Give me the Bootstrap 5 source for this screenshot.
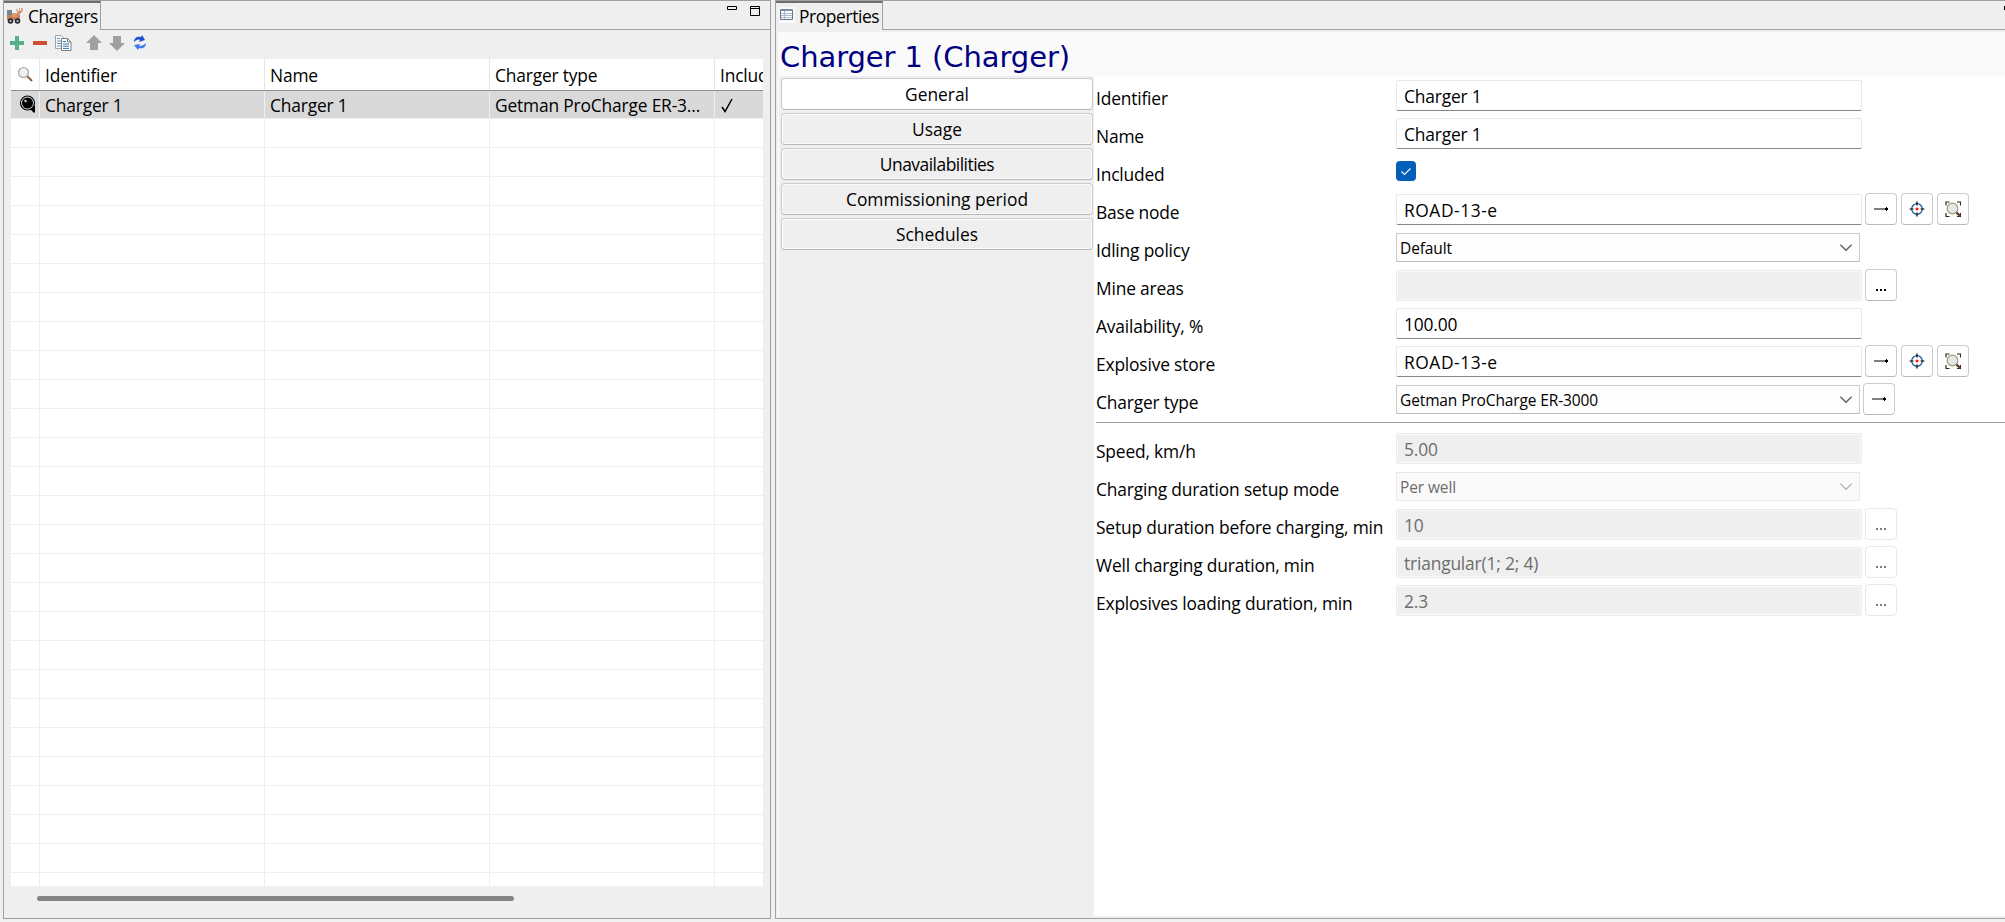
<!DOCTYPE html>
<html lang="en">
<head>
<meta charset="utf-8">
<title>Chargers</title>
<link href="https://cdn.jsdelivr.net/npm/bootstrap@5.3.0/dist/css/bootstrap.min.css" rel="stylesheet">
<style>
body{background:#f0f0f0;font-family:"Open Sans","Noto Sans",sans-serif;font-size:17.4px;line-height:24px;color:#000;letter-spacing:-.18px;height:922px;overflow:hidden}
svg{display:block;flex:none}
.pane{border:1px solid #a0a0a0;border-top-width:1px;background:#efefef;height:919px;flex:none}
.pane-left{width:768px;margin-left:3px}
.pane-right{width:1230px;border-right:0;margin-left:4px}
.tabstrip{height:29px;flex:none}
.tab-on{border-top:2px solid #6e6e6e;border-right:1px solid #a0a0a0;height:29px;white-space:nowrap;flex:none}
.tab-on span{letter-spacing:-.4px;margin:-1px 0 0 4px}
.tab-rest{border-bottom:1px solid #a0a0a0}
.tools{height:29px;flex:none}
.grid-view{margin-left:7px;width:752px;height:827px;background:#fff;overflow:hidden;flex:none}
.grid-row{display:grid;grid-template-columns:29px 225px 225px 225px 48px;height:29px;border-bottom:1px solid #efefef}
.grid-row>div{border-right:1px solid #efefef;padding-left:5px;white-space:nowrap;overflow:hidden;line-height:29px}
.grid-row>div:last-child{border-right:0}
.grid-head{height:32px;border-bottom:1px solid #909090}
.grid-head>div{line-height:33px;border-color:#e5e5e5}
.grid-sel{height:28px;background:#d9d9d9}
.scroll-thumb{margin:10px 0 0 33px;width:477px;height:5px;border-radius:3px;background:#858585}
.obj-title{height:44px;margin-left:2px;padding-left:2px;background:#fafafa;color:#000080;font:29px/50px "DejaVu Sans",sans-serif;letter-spacing:-.08px;white-space:nowrap}
.side{width:316px;margin-left:2px;border-left:1px solid #fff;padding:2px 1px 0 2px;gap:3px}
.side-btn{height:32px;border:1px solid #ccc;border-bottom-color:#b8b8b8;border-radius:4px;background:#efefef;box-shadow:inset 0 0 0 1px #fbfbfb;text-align:center;padding:0;line-height:31px;color:#000}
.side-btn.on{background:#fff}
.tight{letter-spacing:-.5px}
.props{background:#fff;padding:2px 0 0 2px}
.prop{height:38px;padding-top:2px}
.prop>label{width:300px;white-space:nowrap;line-height:36px}
.fld{width:466px;height:31px;border:1px solid #e8e8e8;border-bottom-color:#868686;border-radius:2px;padding-left:7px;line-height:31px;background:#fff}
.fld.node-id{letter-spacing:.55px}
.fld.off{background:#efefef;border-color:#ebebeb;box-shadow:inset 0 0 0 1px #fafafa;color:#6d6d6d}
.combo{width:464px;height:29px;margin-top:1px;border:1px solid #ccc;border-bottom-color:#bbb;border-radius:1px;background:#fdfdfd;padding:0 6px 0 3px;font-size:15.5px;letter-spacing:-.12px}
.combo.off{background:#fafafa;border-color:#e8e8e8;color:#6d6d6d}
.mini{width:32px;height:32px;margin:-1px 4px 0 0;border:1px solid #ccc;border-bottom-color:#b8b8b8;border-radius:4px;background:#fff;padding:0;display:flex;align-items:center;justify-content:center}
.mini.off{border-color:#e8e8e8}
.mini.off svg{opacity:.5}
.btns{margin-left:3px}
.tick{width:20px;height:20px;margin-top:5px;border-radius:4px;background:#005fb8}
.rule{height:1px;background:#a0a0a0;margin:2px 0 8px}
</style>
</head>
<body>
<svg width="0" height="0" class="position-absolute">
<defs>
<symbol id="arrow" viewBox="0 0 16 16"><path d="M1 8h11" stroke="#808080" stroke-width="2"/><path d="M12 7h1V6h1v1h1v2h-1v1h-1V9h-1z"/></symbol>
<symbol id="target" viewBox="0 0 16 16"><circle cx="8" cy="8" r="5.300" fill="none" stroke="#1c5a90" stroke-width="1.300"/><path d="M8 .5v4M8 11.500v4M.5 8h4M11.500 8h4" stroke="#000" stroke-width="1.200"/><path d="M8 6.500v3M6.500 8h3" stroke="#f00" stroke-width="1.300"/></symbol>
<symbol id="find" viewBox="0 0 16 16"><path d="M1 4.500V1h3.500M12 1h3.500v3.500M1 12v3.500h3.500M12 15.500h3.500V12" fill="none" stroke="#2b2632" stroke-width="1.200"/><path d="M10.500 10.500l4.500 4.500" stroke="#59402d" stroke-width="2.400"/><circle cx="7.500" cy="7.500" r="5.300" fill="#e3e8ec" stroke="#a59c70" stroke-width="1.200"/></symbol>
<symbol id="dots" viewBox="0 0 16 16"><path d="M3 12h2v2H3zM7 12h2v2H7zM11 12h2v2h-2z"/></symbol>
<symbol id="chev" viewBox="0 0 12 8"><path d="M1 1.500l5 5 5-5" fill="none" stroke="currentColor" stroke-width="1.100"/></symbol>
</defs>
</svg>
<div class="d-flex">
<section class="pane pane-left d-flex flex-column">
 <div class="tabstrip d-flex">
  <div class="tab-on d-flex align-items-center" style="width:97px">
   <svg width="17" height="17" viewBox="0 0 17 17" style="margin:-1px 0 0 3px"><path d="M9 1h2v2h1V0h1v3h1V0h2v3l-2 2-3 3z" fill="#e0aa87"/><path d="M9 8l5-5" stroke="#bd8263" stroke-width="1.300"/><path d="M0 2h5v6H0z" fill="#718396"/><path d="M0 7h13v5H0z" fill="#c47f5b"/><path d="M5 5h5v4H5z" fill="#dc9a70"/><circle cx="3.500" cy="13" r="2.800" fill="#252b35"/><circle cx="10.500" cy="13" r="2.800" fill="#252b35"/><circle cx="3.500" cy="13" r="1" fill="#ddd"/><circle cx="10.500" cy="13" r="1" fill="#ddd"/></svg>
   <span>Chargers</span>
  </div>
  <div class="tab-rest flex-grow-1 d-flex justify-content-end">
   <svg width="38" height="14" viewBox="0 0 38 14" style="margin:3px 8px 0 0" fill="none" stroke="#000"><path d="M3.500 2.500h9v3h-9zM26.500 2.500h9v9h-9zM26.500 4.500h9"/></svg>
  </div>
 </div>
 <div class="tools">
  <svg width="140" height="20" viewBox="0 0 140 20" style="margin:3px 0 0 6px"><path d="M5 3h4v5h5v4H9v5H5v-5H0V8h5z" fill="#56b18b"/><path d="M23 8h14v4H23z" fill="#ce4f34"/><path d="M45.500 2.500h6l4 4v9h-10z" fill="#f8fafc" stroke="#9aa5b0"/><path d="M47 5.500h3M47 8h5M47 10.500h5M47 13h5" stroke="#6c9cc8"/><path d="M51.500 5.500h6l3.500 3.500v8.500h-9.500z" fill="#fff" stroke="#7c7f83"/><path d="M57.500 5.500v3.500h3.500" fill="none" stroke="#7c7f83"/><path d="M53 8.500h3M53 11h6M53 13.200h6M53 15.400h6" stroke="#3675b0"/><path d="M84 2l8 8h-4v7h-8v-7h-4z" fill="#a0a0a0"/><path d="M107 18l-8-8h4V3h8v7h4z" fill="#a0a0a0"/><path d="M124 9c0-4 3-6 7-5l1-2 3 5-6 2 1-2c-2-1-4 0-6 2z" fill="#1f50cf"/><path d="M136 10c0 4-3 6-7 5l-1 2-4-5 6-1-1 2c3 0 5-1 7-3z" fill="#3f79ee"/></svg>
 </div>
 <div class="grid-view">
  <div class="grid-row grid-head"><div class="ps-0"><svg width="18" height="18" viewBox="0 0 18 18" style="margin:7px 0 0 6px"><path d="M10 10l5 5" stroke="#7d6249" stroke-width="2"/><circle cx="6.500" cy="6.500" r="5" fill="#edf0ee" stroke="#aaa69a" stroke-width="1.200"/></svg></div><div>Identifier</div><div>Name</div><div>Charger type</div><div>Included</div></div>
  <div class="grid-row grid-sel"><div class="ps-0"><svg width="18" height="19" viewBox="0 0 18 19" style="margin:4px 0 0 8px"><path d="M10 10l6 1v6l-1 1-5-5z"/><circle cx="8.500" cy="8" r="7" fill="#d9d9d9" stroke="#000" stroke-width="1.200"/><circle cx="8.500" cy="8" r="5.500"/><circle cx="6.500" cy="6" r="1.200" fill="#ddd"/></svg></div><div>Charger 1</div><div>Charger 1</div><div>Getman ProCharge ER-3...</div><div><svg width="14" height="16" viewBox="0 0 14 16" style="margin-top:7px"><path d="M2 9l3 4.500L12 1" fill="none" stroke="#000" stroke-width="1.500"/></svg></div></div>
  <div id="blankRows"></div>
 </div>
 <div class="scroll-thumb"></div>
</section>
<section class="pane pane-right d-flex flex-column">
 <div class="tabstrip d-flex">
  <div class="tab-on d-flex align-items-center" style="width:107px">
   <svg width="16" height="16" viewBox="0 0 16 16" style="margin:-3px 0 0 3px"><path fill="#fafafa" d="M0 0h16v16H0z"/><path d="M1.500 2.500h12v10h-12z" fill="#fff" stroke="#60728f"/><path d="M1 2h13v2H1z" fill="#7b8da8"/><path d="M2 6.500h11M2 8.500h11M2 10.500h11M5.500 4v8" stroke="#a9b7cb"/></svg>
   <span>Properties</span>
  </div>
  <div class="tab-rest flex-grow-1 d-flex justify-content-end">
   <svg width="2" height="4" viewBox="0 0 2 4" style="margin-top:5px"><path d="M1 0h1v4H1z"/></svg>
  </div>
 </div>
 <div style="height:2px"></div>
 <div class="obj-title">Charger 1 (Charger)</div>
 <div class="d-flex" style="height:840px">
  <nav class="side d-flex flex-column">
   <button class="side-btn on">General</button><button class="side-btn">Usage</button><button class="side-btn tight">Unavailabilities</button><button class="side-btn">Commissioning period</button><button class="side-btn">Schedules</button>
  </nav>
  <div class="props flex-grow-1" id="props"></div>
 </div>
</section>
</div>
<script>
document.getElementById('blankRows').innerHTML = '<div class="grid-row"><div></div><div></div><div></div><div></div><div></div></div>'.repeat(27);
const btn = (icon, off) => `<button class="mini${off ? ' off' : ''}"><svg width="16" height="16"><use href="#${icon}"/></svg></button>`;
const rows = [
 ['Identifier','text','Charger 1'],
 ['Name','text','Charger 1'],
 ['Included','check'],
 ['Base node','node-id','ROAD-13-e',['arrow','target','find']],
 ['Idling policy','combo','Default'],
 ['Mine areas','off','',['dots']],
 ['Availability, %','text','100.00'],
 ['Explosive store','node-id','ROAD-13-e',['arrow','target','find']],
 ['Charger type','combo','Getman ProCharge ER-3000',['arrow']],
 null,
 ['Speed, km/h','off','5.00'],
 ['Charging duration setup mode','combo off','Per well'],
 ['Setup duration before charging, min','off','10',['dots'],true],
 ['Well charging duration, min','off','triangular(1; 2; 4)',['dots'],true],
 ['Explosives loading duration, min','off','2.3',['dots'],true]
];
document.getElementById('props').innerHTML = rows.map(r => {
 if (!r) return '<div class="rule"></div>';
 const [label, kind, value, icons = [], dim] = r;
 let f;
 if (kind === 'check') f = '<div class="tick"><svg width="20" height="20"><path d="M5.500 10.500l3 3 6-6" fill="none" stroke="#fff" stroke-width="1.100"/></svg></div>';
 else if (kind.startsWith('combo')) f = `<div class="${kind} d-flex align-items-center justify-content-between"><span>${value}</span><svg width="14" height="9" style="color:${kind.includes('off') ? '#b5b5b5' : '#5c5c5c'}"><use href="#chev"/></svg></div>`;
 else f = `<div class="fld ${kind}">${value}</div>`;
 return `<div class="prop d-flex align-items-start"><label>${label}</label>${f}<div class="btns d-flex">${icons.map(i => btn(i, dim)).join('')}</div></div>`;
}).join('');
</script>
<script src="https://cdn.jsdelivr.net/npm/bootstrap@5.3.0/dist/js/bootstrap.bundle.min.js"></script>
</body>
</html>
